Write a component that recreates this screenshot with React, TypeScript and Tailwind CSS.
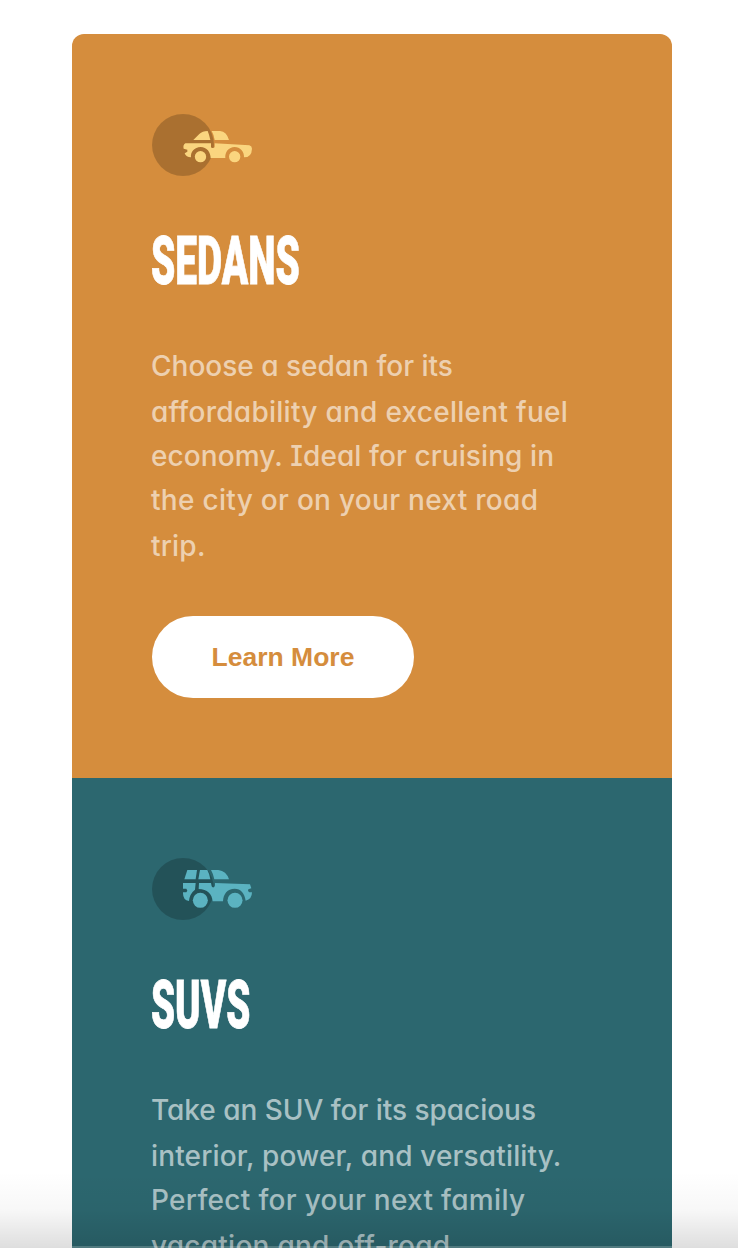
import type { ReactNode } from "react";

type Line = { text: string; className: string };

function SedanIcon() {
  return (
    <svg viewBox="36 30 300 186" className="block h-[62px] w-[100px]" aria-hidden="true">
      <circle cx="129" cy="123" r="93" fill="#000" fillOpacity="0.2" />
      <g fill="#fad57f">
        <path d="M160 108L178 90Q187 81 203 81Q208 93 211 108Z" />
        <path d="M215 81H240Q260 83 267 108H224Q222 93 215 81Z" />
        <path d="M136 118H213V129Q213 132 218 132T224 129V118L328 124Q336 126 336 134Q335 160 312 160C313 142 300 129 284 129C266 129 254 145 256 162H212C212 145 200 129 182 129C163 129 151 145 153 160Q138 160 134 148L142 143V137L131 134Q128 124 136 118Z" />
        <circle cx="181.500" cy="158" r="17" />
        <circle cx="284" cy="158" r="17" />
      </g>
    </svg>
  );
}

function SuvIcon() {
  return (
    <svg viewBox="36 30 300 186" className="block h-[62px] w-[100px]" aria-hidden="true">
      <circle cx="129" cy="123" r="93" fill="#000" fillOpacity="0.2" />
      <g fill="#5bb3c1">
        <path d="M142 66H171L167 94H133Z" />
        <path d="M180 66H202Q209 78 211 94H175Z" />
        <path d="M213 66H235Q259 69 267 94H223Q220 78 213 66Z" />
        <path d="M129 105H167L165 125Q149 137 147 159Q129 157 129 136V133H139L142 128L139 122H129Z" />
        <path d="M177 105H213L215 115Q217 119 221 118T225 112V105L330 109L334 121L325 124L324 129L328 133H336Q336 154 317 158C314 136 302 122 284 122C262 122 250 138 249 160H218C216 138 202 123 176 123Z" />
        <circle cx="181" cy="157" r="22.5" />
        <circle cx="285" cy="157" r="22.5" />
      </g>
    </svg>
  );
}

type CardProps = {
  icon: ReactNode;
  title: string;
  titleClass: string;
  lines: Line[];
  className: string;
  buttonClass: string;
};

function Card({ icon, title, titleClass, lines, className, buttonClass }: CardProps) {
  return (
    <section className={`flex shrink-0 flex-col items-start p-20 ${className}`}>
      {icon}
      <h2
        className={`mt-[45px] -ml-px origin-left font-['Roboto'] text-[67px] leading-[80px] font-black whitespace-nowrap text-white uppercase [-webkit-text-stroke:0.8px_white] ${titleClass}`}
      >
        {title}
      </h2>
      <p className="mt-[43px] -ml-px flex flex-col items-start font-['Inter',sans-serif] text-[28px] leading-[45px] font-medium whitespace-nowrap text-white/60 [font-feature-settings:'cv11','cv08']">
        {lines.map((line) => (
          <span key={line.text} className={line.className}>
            {line.text}
          </span>
        ))}
      </p>
      <button
        className={`mt-[47px] h-[82px] w-[262px] rounded-full bg-white pt-[2px] font-['Liberation_Sans',Arial,sans-serif] text-[26.5px] font-bold ${buttonClass}`}
      >
        Learn More
      </button>
    </section>
  );
}

export default function App() {
  return (
    <main className="relative flex h-[1248px] w-[738px] flex-col overflow-hidden bg-white pt-[34px] pl-[72px]">
      <div className="flex w-[600px] flex-col overflow-hidden rounded-t-[12px]">
        <Card
          icon={<SedanIcon />}
          title="Sedans"
          titleClass="scale-x-[0.58]"
          className="h-[744px] bg-[#d58d3d]"
          buttonClass="text-[#d58d3d]"
          lines={[
            { text: "Choose a sedan for its", className: "h-[46px]" },
            { text: "affordability and excellent fuel", className: "h-[44px] tracking-[0.27px]" },
            { text: "economy. Ideal for cruising in", className: "h-[44px] tracking-[0.1px]" },
            { text: "the city or on your next road", className: "h-[46px] tracking-[0.29px]" },
            { text: "trip.", className: "h-[45px] tracking-[0.2px]" },
          ]}
        />
        <Card
          icon={<SuvIcon />}
          title="SUVs"
          titleClass="scale-x-[0.575]"
          className="h-[744px] bg-[#2c676f]"
          buttonClass="text-[#2c676f]"
          lines={[
            { text: "Take an SUV for its spacious", className: "h-[46px] tracking-[-0.03px]" },
            { text: "interior, power, and versatility.", className: "h-[44px] tracking-[0.15px]" },
            { text: "Perfect for your next family", className: "h-[46px] tracking-[0.3px]" },
            { text: "vacation and off-road", className: "h-[44px] tracking-[0.25px]" },
            { text: "adventures.", className: "h-[45px]" },
          ]}
        />
      </div>
      <div className="pointer-events-none absolute inset-x-0 bottom-0 h-[76px] bg-gradient-to-b from-black/0 via-black/3 to-black/13" />
      <div className="pointer-events-none absolute bottom-0 left-[72px] h-[2px] w-[600px] bg-white/20" />
    </main>
  );
}
